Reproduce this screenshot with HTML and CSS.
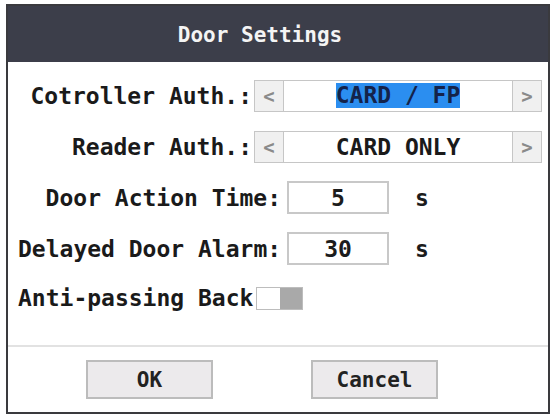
FILE: index.html
```html
<!DOCTYPE html>
<html>
<head>
<meta charset="utf-8">
<title>Door Settings</title>
<link rel="stylesheet" href="styles.css">
</head>
<body>
<div class="dialog">
  <div class="dialog-header">Door Settings</div>
  <div class="dialog-body">
    <div class="row">
      <span class="label label-select">Cotroller Auth.:</span>
      <div class="selector">
        <span class="arrow">&lt;</span>
        <span class="choice"><span class="selected">CARD / FP</span></span>
        <span class="arrow">&gt;</span>
      </div>
    </div>
    <div class="row">
      <span class="label label-select">Reader Auth.:</span>
      <div class="selector">
        <span class="arrow">&lt;</span>
        <span class="choice">CARD ONLY</span>
        <span class="arrow">&gt;</span>
      </div>
    </div>
    <div class="row">
      <span class="label label-input">Door Action Time:</span>
      <span class="field">5</span>
      <span class="unit">s</span>
    </div>
    <div class="row">
      <span class="label label-input">Delayed Door Alarm:</span>
      <span class="field">30</span>
      <span class="unit">s</span>
    </div>
    <div class="row row-toggle">
      <span class="label">Anti-passing Back</span>
      <span class="toggle"><span class="toggle-off"></span><span class="toggle-knob"></span></span>
    </div>
  </div>
  <div class="dialog-footer">
    <button class="btn">OK</button>
    <button class="btn btn-cancel">Cancel</button>
  </div>
</div>
</body>
</html>
```
FILE: styles.css
```css
html, body {
  margin: 0;
  padding: 0;
  background: #ffffff;
}

body {
  font-family: "DejaVu Sans Mono", "Liberation Mono", monospace;
  font-weight: bold;
  color: #1c1c1c;
}

.dialog {
  box-sizing: border-box;
  margin: 4px 6px 0 6px;
  width: 544px;
  height: 410px;
  border: 2px solid #3a3a3e;
  display: flex;
  flex-direction: column;
  background: #ffffff;
}

.dialog-header {
  height: 56px;
  background: #3c3e4a;
  color: #f4f4f4;
  font-size: 21px;
  display: flex;
  align-items: center;
  justify-content: center;
  padding: 2px 36px 0 0;
  box-sizing: border-box;
}

.dialog-body {
  height: 283px;
  box-sizing: border-box;
  padding: 17px 0 0 10px;
  display: flex;
  flex-direction: column;
  gap: 18px;
}

.row {
  display: flex;
  align-items: center;
  height: 33px;
  font-size: 23px;
}

.label {
  white-space: nowrap;
  color: #1a1a1a;
}

.label-select {
  width: 234px;
  text-align: right;
  margin-right: 2px;
}

.label-input {
  width: 263px;
  text-align: right;
  margin-right: 6px;
}

.selector {
  display: flex;
  width: 288px;
  height: 32px;
  box-sizing: border-box;
}

.arrow {
  width: 30px;
  box-sizing: border-box;
  background: #f0f0f0;
  border: 1px solid #c6c6c6;
  color: #8a8a8a;
  font-size: 19px;
  font-weight: bold;
  display: flex;
  align-items: center;
  justify-content: center;
}

.choice {
  flex: 1;
  border-top: 1px solid #c6c6c6;
  border-bottom: 1px solid #c6c6c6;
  background: #ffffff;
  display: flex;
  align-items: center;
  justify-content: center;
  color: #1a1a1a;
}

.selected {
  background: #2b8ef0;
  color: #14234a;
  line-height: 25px;
}

.field {
  box-sizing: border-box;
  width: 102px;
  height: 33px;
  border: 2px solid #c8c8c8;
  background: #ffffff;
  display: flex;
  align-items: center;
  justify-content: center;
}

.unit {
  margin-left: 26px;
}

.row-toggle {
  height: 30px;
}

.toggle {
  display: flex;
  margin-left: 3px;
  width: 47px;
  height: 23px;
  box-sizing: border-box;
  border: 1px solid #bdbdbd;
}

.toggle-off {
  flex: 1;
  background: #ffffff;
}

.toggle-knob {
  flex: 1;
  background: #a9a9a9;
}

.dialog-footer {
  flex: 1;
  border-top: 2px solid #e2e2e2;
  display: flex;
  align-items: center;
  padding-left: 78px;
  gap: 98px;
}

.btn {
  width: 127px;
  height: 39px;
  box-sizing: border-box;
  background: #eceaec;
  border: 2px solid #bcbcbc;
  font-family: "DejaVu Sans Mono", "Liberation Mono", monospace;
  font-weight: bold;
  font-size: 21px;
  color: #222222;
  padding: 0;
}
```
